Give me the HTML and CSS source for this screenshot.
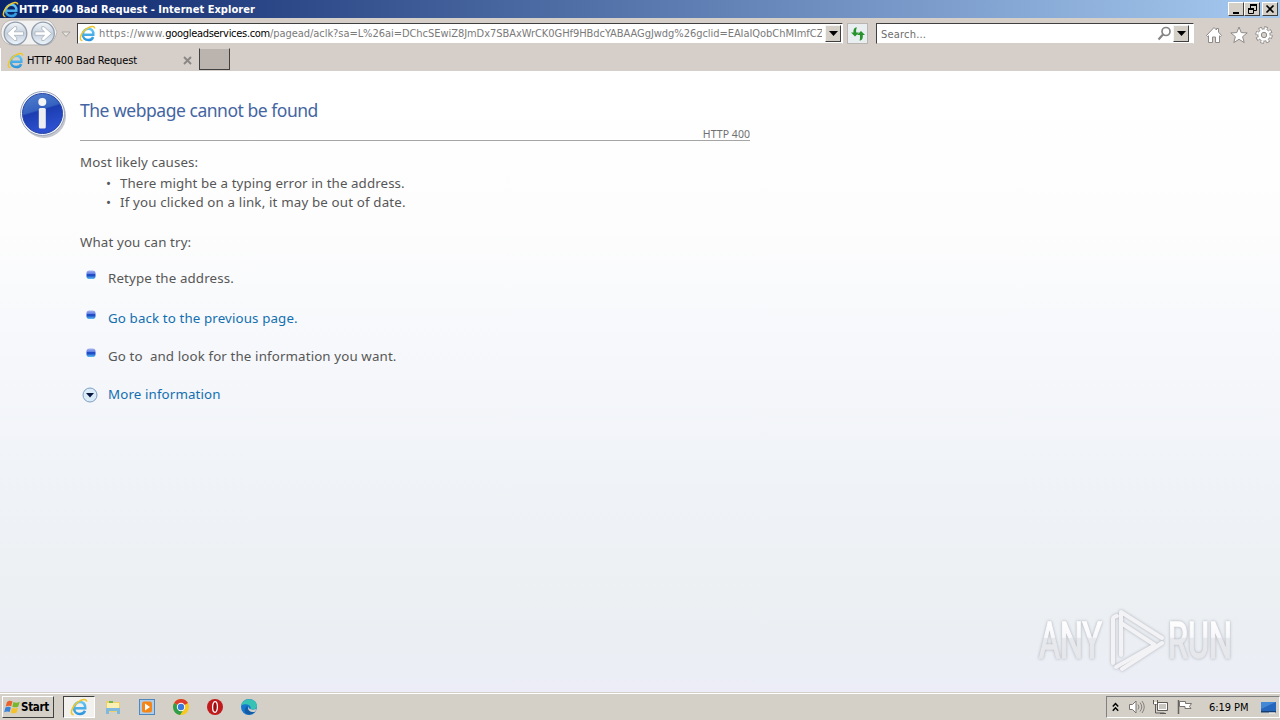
FILE: index.html
```html
<!DOCTYPE html>
<html lang="en">
<head>
    <meta charset="UTF-8">
    <title>HTTP 400 Bad Request</title>
    <link rel="stylesheet" href="styles.css">
</head>
<body>
    <!-- shared icons -->
    <svg class="defs" width="0" height="0">
        <defs>
            <linearGradient id="ieBlue" gradientUnits="userSpaceOnUse" x1="0" y1="2" x2="0" y2="15">
                <stop offset="0" stop-color="#6fcdf6"/>
                <stop offset="1" stop-color="#2a93dc"/>
            </linearGradient>
            <linearGradient id="nav" x1="0" y1="0" x2="0" y2="1">
                <stop offset="0" stop-color="#f4f7fb"/>
                <stop offset="0.5" stop-color="#c5d0dd"/>
                <stop offset="1" stop-color="#eef5fc"/>
            </linearGradient>
            <linearGradient id="info" x1="0" y1="0" x2="0.3" y2="1">
                <stop offset="0" stop-color="#5583cf"/>
                <stop offset="0.48" stop-color="#3562c0"/>
                <stop offset="0.52" stop-color="#1c3db0"/>
                <stop offset="1" stop-color="#2c50d0"/>
            </linearGradient>
            <linearGradient id="dot" x1="0" y1="0" x2="0" y2="1">
                <stop offset="0" stop-color="#a9b4f0"/>
                <stop offset="0.4" stop-color="#5e7fe2"/>
                <stop offset="0.5" stop-color="#0b35bd"/>
                <stop offset="1" stop-color="#62c1f5"/>
            </linearGradient>
            <linearGradient id="mark" gradientUnits="userSpaceOnUse" x1="0" y1="12" x2="0" y2="54">
                <stop offset="0" stop-color="#ffffff"/>
                <stop offset="0.46" stop-color="#f8f8fb"/>
                <stop offset="0.48" stop-color="#e8e9ed"/>
                <stop offset="1" stop-color="#e6e7eb"/>
            </linearGradient>
            <symbol id="ie" viewBox="0 0 16 16">
                <path d="M4.800 9.100h8.700C13.800 5.200 11.500 3.600 9 3.600 6 3.600 3.600 5.800 3.600 9s2.300 5.200 5.200 5.200c2.200 0 3.800-1 4.500-2.900" fill="none" stroke="url(#ieBlue)" stroke-width="2.300"/>
                <path d="M3.200 14.800C-.6 14.500 1.500 7.500 7 3.700c3.500-2.500 7.800-3.500 7.700-.5" fill="none" stroke="#efc62b" stroke-width="1.400"/>
            </symbol>
            <symbol id="bullet" viewBox="0 0 10 10">
                <rect x="0.500" y="0.500" width="9" height="8.500" rx="2.800" fill="url(#dot)"/>
            </symbol>
        </defs>
    </svg>

    <div class="titlebar">
        <svg class="title-icon" width="17" height="17"><use href="#ie"/></svg>
        <span class="title-text">HTTP 400 Bad Request - Internet Explorer</span>
        <div class="win-buttons">
            <span class="win-btn"><svg width="14" height="12"><path d="M4 9h6v2H4z"/></svg></span>
            <span class="win-btn"><svg width="14" height="12"><path d="M5 1h7v2H5zM3 5h6v2H3z"/><path d="M5.500 2v3M11.500 2v5.500H9M3.500 6v4.500h5V6" fill="none" stroke="#000"/></svg></span>
            <span class="win-btn close"><svg width="14" height="12"><path d="M3.500 2.500l7 7M10.500 2.500l-7 7" stroke="#000" stroke-width="1.700"/></svg></span>
        </div>
    </div>

    <div class="navbar">
        <svg class="nav-buttons" width="72" height="28">
            <path d="M13 1h33c5 0 8 5 11 12-2 8-6 13-12 13H13C-3 26-3 1 13 1z" fill="#f3f2f2" stroke="#bdb8b4"/>
            <circle cx="15.500" cy="14.500" r="11.300" fill="url(#nav)" stroke="#929eac" stroke-width="1.300"/>
            <circle cx="43" cy="14.500" r="11.300" fill="url(#nav)" stroke="#929eac" stroke-width="1.300"/>
            <path d="M7 14.500l7.500-6.800h2.200v2.600l-2.700 2.500h9.500v3.500H14l2.700 2.500v2.700h-2.200z" fill="#fff" stroke="#a8b2bd" stroke-width="0.800"/>
            <path d="M51.500 14.500L44 7.700h-2.200v2.600l2.700 2.500H35v3.500h9.500l-2.700 2.500v2.700H44z" fill="#fff" stroke="#a8b2bd" stroke-width="0.800"/>
            <path d="M62 13h8l-4 4.500z" fill="#e8e4e0" stroke="#aaa5a1"/>
        </svg>
        <div class="field address">
            <svg width="17" height="17"><use href="#ie"/></svg>
            <div class="url"><span class="scheme">https://www.</span><b>googleadservices.com</b>/pagead/aclk?sa=L%26ai=DChcSEwiZ8JmDx7SBAxWrCK0GHf9HBdcYABAAGgJwdg%26gclid=EAIaIQobChMImfCZg</div>
            <span class="drop"><svg width="9" height="5"><path d="M0 0h9L4.500 5z"/></svg></span>
        </div>
        <div class="refresh">
            <svg width="16" height="16"><path d="M7 1.500C4 1.500 3.300 3.500 3.500 6.500H1l4 4 4-4H6.200C6 4.500 6 3 7 1.500zM9.500 14.500c3 0 3.500-2.500 3.300-5.500H15l-4-4-4 4h2.900c0 2.500.4 4-.4 5.500z" fill="#27932d"/></svg>
        </div>
        <div class="field search">
            <span class="placeholder">Search...</span>
            <svg width="15" height="15"><circle cx="9" cy="5.500" r="4" fill="none" stroke="#858585" stroke-width="1.700"/><path d="M6 8.500l-4.500 5" stroke="#858585" stroke-width="2.200"/></svg>
            <span class="drop"><svg width="9" height="5"><path d="M0 0h9L4.500 5z"/></svg></span>
        </div>
        <div class="tools">
            <svg width="18" height="18"><path d="M9 1.500l2.500 2.500V2.500h2v3.600L16.500 9.500l-1 1-1-.7V16.500h-4V11h-3v5.500h-4V9.800l-1 .7-1-1z" fill="#fff" stroke="#8f8b88"/></svg>
            <svg width="18" height="18"><path d="M9 1l2.200 5.600 6 .3-4.600 3.800 1.600 5.900L9 13.300l-5.200 3.300 1.600-5.900L.8 6.900l6-.3z" fill="#fff" stroke="#8f8b88"/></svg>
            <svg width="18" height="18"><circle cx="9" cy="9" r="7" fill="none" stroke="#8f8b88" stroke-width="3.400" stroke-dasharray="3.300 2.200"/><circle cx="9" cy="9" r="6.200" fill="#fff" stroke="#8f8b88"/><circle cx="9" cy="9" r="6.600" fill="none" stroke="#fff" stroke-width="2.400" stroke-dasharray="2.100 3.080" stroke-dashoffset="-0.500"/><circle cx="9" cy="9" r="2.700" fill="#d4d0c8" stroke="#8f8b88"/></svg>
        </div>
    </div>

    <div class="tabs">
        <div class="tab">
            <svg width="17" height="17"><use href="#ie"/></svg>
            <span class="tab-title">HTTP 400 Bad Request</span>
            <svg class="tab-close" width="9" height="9"><path d="M1 1l7 7M8 1L1 8" stroke="#8b8784" stroke-width="1.900"/></svg>
        </div>
        <div class="new-tab"></div>
    </div>

    <div class="page">
        <svg class="info-icon" width="50" height="50">
            <ellipse cx="24" cy="25" rx="22" ry="22" fill="#c3c6cc"/>
            <circle cx="22.500" cy="22.500" r="22" fill="#f5f7fb" stroke="#97a3ba"/>
            <circle cx="22.500" cy="22.500" r="20" fill="url(#info)" stroke="#2947a6"/>
            <circle cx="22.300" cy="11" r="4" fill="#f4f5f7"/>
            <rect x="18.800" y="17" width="7" height="20.500" rx="1.500" fill="#eceef2"/>
        </svg>
        <div class="message">
            <h1>The webpage cannot be found</h1>
            <div class="code">HTTP 400</div>
            <p class="causes-title">Most likely causes:</p>
            <ul class="causes">
                <li>There might be a typing error in the address.</li>
                <li class="stale">If you clicked on a link, it may be out of date.</li>
            </ul>
            <p class="try-title">What you can try:</p>
            <div class="try">
                <svg width="10" height="10"><use href="#bullet"/></svg>
                <span>Retype the address.</span>
            </div>
            <div class="try back">
                <svg width="10" height="10"><use href="#bullet"/></svg>
                <a>Go back to the previous page.</a>
            </div>
            <div class="try">
                <svg width="10" height="10"><use href="#bullet"/></svg>
                <span>Go to&nbsp; and look for the information you want.</span>
            </div>
            <div class="try more">
                <svg width="16" height="16"><circle cx="8" cy="8" r="7" fill="#dcebf8" stroke="#7f9fc0"/><path d="M4 6h8l-4 4.500z" fill="#06163c"/></svg>
                <a>More information</a>
            </div>
        </div>
        <svg class="watermark" width="224" height="76" viewBox="0 0 224 76">
            <g class="mark-text">
                <text x="5" y="52" textLength="63" lengthAdjust="spacingAndGlyphs">ANY</text>
                <text x="134" y="52" textLength="64" lengthAdjust="spacingAndGlyphs">RUN</text>
            </g>
            <g class="mark-logo">
                <path d="M79 57V13q0-2 4-3"/>
                <path d="M87 49V6l41 26"/>
                <path d="M87 17l34 22-39 22"/>
                <path d="M128 37L88 63"/>
            </g>
        </svg>
    </div>

    <div class="taskbar">
        <div class="start">
            <svg width="17" height="16"><path d="M3 3c2-2 4-1.500 5.500-.5L7.200 7.300C5.500 6.500 4 6.500 1.700 7.500z" fill="#e8642c"/><path d="M9.500 3c2 1 4 1 6.200-.3L14.300 7.500c-2 1.200-4 1-6 .2z" fill="#78b72c"/><path d="M1.400 8.600c2-1.200 4-1 5.500-.2L5.600 13C4 12.200 2.300 12.200.2 13.300z" fill="#3a83d8"/><path d="M8 8.800c2 1 4 1 6 0L12.700 13.500c-2 1.300-4 1-6 0z" fill="#f6c22c"/></svg>
            <span>Start</span>
        </div>
        <div class="task active"><svg width="18" height="18"><use href="#ie"/></svg></div>
        <div class="task">
            <svg width="18" height="18"><path d="M2 3h5l1 1h8v10H2z" fill="#eed06a"/><path d="M3 5h12v5H3z" fill="#fbf0b4"/><path d="M5 3h4v2H5z" fill="#71b54e"/><path d="M2 10h14v6h-3v-3H5v3H2z" fill="#7fb9df"/></svg>
        </div>
        <div class="task">
            <svg width="18" height="18"><rect x="1.500" y="1.500" width="15" height="15" fill="#aecdeb" stroke="#4f88bd"/><rect x="4" y="3.500" width="10" height="11" rx="2" fill="#f48618"/><path d="M7 5.500v7l5-3.500z" fill="#fff"/></svg>
        </div>
        <div class="task">
            <svg width="18" height="18"><circle cx="9" cy="9" r="8" fill="#f8c91c"/><path d="M9 9L2.100 5A8 8 0 0 1 16 5z" fill="#dc3d2e"/><path d="M9 9L2.100 5A8 8 0 0 0 8 17l4-6z" fill="#2f9e4b"/><circle cx="9" cy="9" r="4.200" fill="#fff"/><circle cx="9" cy="9" r="3.200" fill="#3b79dc"/></svg>
        </div>
        <div class="task">
            <svg width="18" height="18"><circle cx="9" cy="9" r="8" fill="#c01a1c"/><ellipse cx="9" cy="9" rx="2.400" ry="5.300" fill="#a20a0e" stroke="#fff" stroke-width="1.300"/></svg>
        </div>
        <div class="task">
            <svg width="18" height="18"><circle cx="9" cy="9" r="8" fill="#1677cf"/><path d="M1.200 7.500C2.500-1 16.500-1 17 8c0 3-4 4.500-6.500 3 1.500-4-4.500-6.500-9.300-3.500z" fill="#38c2b4"/><path d="M8 8c-1.500 4 2 7.300 7 5.500-4 5-12 3.500-10-2.500C5.500 9 7 8 8 8z" fill="#145aa5"/><path d="M8.500 8c-1 3 3.500 5 8.500 2.500l-2 3.200C10.500 15 6.500 12 8.500 8z" fill="#d4d0c8"/></svg>
        </div>
        <div class="tray">
            <svg class="chevrons" width="7" height="10"><path d="M.8 4.500l2.700-3 2.700 3M.8 8.800l2.700-3 2.700 3" fill="none" stroke="#000" stroke-width="1.500"/></svg>
            <svg class="speaker" width="18" height="16"><path d="M1.500 5.500h3L8 2v12l-3.500-3.500h-3z" fill="#fff" stroke="#77736f"/><path d="M10 5.500q2 2.500 0 5M12 3.500q3.500 4.500 0 9M14 2q4.500 6 0 12" fill="none" stroke="#85817d"/></svg>
            <svg class="network" width="17" height="16"><path d="M5.500 3.500h10v8h-10z" fill="#c9c6c2" stroke="#5d5956"/><path d="M6.500 4.500h8v6h-8z" fill="none" stroke="#fff"/><path d="M1.500 1v4h4V1M3.500 5v9h9M8 14.500h6" fill="none" stroke="#5d5956"/><path d="M2 3h3v2H2z" fill="#fff"/></svg>
            <svg class="flag" width="16" height="16"><path d="M1.500 1v14" stroke="#66625f" stroke-width="1.500"/><path d="M2.500 2.500h6v2h6l-2 3 1.500 2H8v-2H2.500z" fill="#fff" stroke="#77736f"/></svg>
            <span class="clock">6:19 PM</span>
            <svg class="desktop" width="15" height="15"><path d="M0 2h15v9H0z" fill="#2766bd"/><path d="M0 2h15L0 9z" fill="#4288d6"/><path d="M0 11h15v1.500H0z" fill="#173e70"/><path d="M8 13h6" stroke="#f4f4f4"/></svg>
        </div>
    </div>
</body>
</html>
```

FILE: styles.css
```css
* {
    box-sizing: border-box;
}
body {
    margin: 0;
    width: 1280px;
    height: 720px;
    overflow: hidden;
    display: flex;
    flex-direction: column;
    background-color: #d4d0c8;
    font-family: "DejaVu Sans Condensed", "DejaVu Sans", sans-serif;
    font-size: 11px;
    color: #000;
}
svg {
    display: block;
    flex: none;
}
.defs {
    position: absolute;
}
span, a, p, h1, li {
    white-space: nowrap;
}

/* title bar */
.titlebar {
    height: 18px;
    flex: none;
    display: flex;
    align-items: center;
    padding: 0 2px;
    background: linear-gradient(90deg, #0a246a, #a6caf0);
}
.title-text {
    color: #fff;
    font-weight: bold;
    letter-spacing: 0.04px;
    flex: 1;
}
.win-buttons {
    display: flex;
}
.win-btn {
    width: 16px;
    height: 14px;
    background-color: #d4d0c8;
    border: 1px solid;
    border-color: #fff #404040 #404040 #fff;
}
.close {
    margin-left: 2px;
}

/* navigation row */
.navbar {
    height: 30px;
    flex: none;
    display: flex;
    align-items: flex-start;
    background-color: #d5cec9;
    border-top: 1px solid #d4d0c8;
}
.nav-buttons {
    margin-right: 5px;
}
.field {
    height: 21px;
    margin-top: 4px;
    display: flex;
    align-items: center;
    background-color: #fff;
    border: 1px solid;
    border-color: #404040 #fff #d4d0c8 #404040;
}
.address {
    width: 766px;
    padding: 0 1px;
}
.url {
    width: 723px;
    margin-left: 3px;
    overflow: hidden;
    white-space: nowrap;
    color: #7a7a7a;
    letter-spacing: -0.05px;
}
.url b {
    font-weight: normal;
    color: #000;
    letter-spacing: -0.3px;
}
.scheme {
    letter-spacing: 0.36px;
}
.drop {
    width: 16px;
    height: 17px;
    margin-left: auto;
    display: flex;
    align-items: center;
    justify-content: center;
    background-color: #d4d0c8;
    border: 1px solid;
    border-color: #f5f5f5 #404040 #404040 #f5f5f5;
}
.refresh {
    width: 21px;
    height: 21px;
    margin: 4px 8px 0 4px;
    padding: 2px;
    background-color: #e9eef1;
    border: 1px solid #b9b6b2;
}
.search {
    width: 318px;
    padding: 0 4px;
    color: #6d6d6d;
}
.placeholder {
    flex: 1;
    padding-top: 1px;
    letter-spacing: 0.2px;
}
.search .drop {
    margin-left: 1px;
}
.tools {
    display: flex;
    gap: 7px;
    margin: 7px 0 0 11px;
}

/* tabs */
.tabs {
    height: 23px;
    flex: none;
    display: flex;
    background-color: #d5cec9;
}
.tab {
    width: 199px;
    display: flex;
    align-items: center;
    padding: 1px 7px 0 6px;
    border-left: 1px solid #fff;
}
.tab-title {
    margin-left: 3px;
    flex: 1;
    letter-spacing: -0.15px;
}
.new-tab {
    width: 31px;
    height: 22px;
    background-color: #bbb3ae;
    border: 1px solid #404040;
    border-top-color: #d5cec9;
}

/* error page */
.page {
    position: relative;
    height: 621px;
    flex: none;
    display: flex;
    background: linear-gradient(#fff 0, #fdfdfd 150px, #f5f7fb 300px, #f0f3f7 400px, #ecf0f3 520px, #ebeff3 570px, #ecedf7 621px);
    font-family: "Noto Sans", "Open Sans", sans-serif;
    font-size: 13.33px;
    letter-spacing: 0.12px;
    color: #575757;
}
.info-icon {
    margin: 20px 10px 0 20px;
}
.message {
    width: 670px;
}
h1 {
    margin: 26px 0 0;
    font-size: 17.5px;
    line-height: 27px;
    font-weight: normal;
    color: #4465a2;
    letter-spacing: -0.47px;
}
.code {
    height: 17px;
    border-bottom: 1px solid #a5a5a5;
    font-size: 10.5px;
    line-height: 20px;
    text-align: right;
    letter-spacing: 0.05px;
    color: #707070;
}
p {
    margin: 0;
    line-height: 20px;
}
.causes-title {
    margin-top: 11px;
}
.causes {
    margin: 2px 0 0;
    padding: 0;
    list-style: none;
}
.causes li {
    display: flex;
    height: 19px;
    line-height: 19px;
    letter-spacing: 0.09px;
}
.causes .stale {
    letter-spacing: 0.15px;
}
.causes li::before {
    content: "•";
    width: 14px;
    margin-left: 26px;
}
.try-title {
    margin-top: 20px;
}
.try {
    display: flex;
    height: 20px;
    line-height: 20px;
    margin: 16px 0 18px;
}
.try svg {
    margin: 2px 12px 0 6px;
}
.back {
    margin-top: 20px;
}
.more svg {
    margin: 3px 10px 0 2px;
}
.try a {
    color: #136fb0;
}
.watermark {
    position: absolute;
    left: 1034px;
    top: 535px;
}
.mark-text {
    font-family: Roboto, sans-serif;
    font-size: 50px;
    fill: url(#mark);
    stroke: url(#mark);
    stroke-width: 1.6px;
    filter: drop-shadow(0 0 1.5px #aaaeb8);
}
.mark-logo {
    fill: none;
    stroke: #f3f3f6;
    stroke-width: 4px;
    stroke-linecap: round;
    stroke-linejoin: round;
    filter: drop-shadow(0 0 1.5px #aaaeb8);
}

/* taskbar */
.taskbar {
    height: 28px;
    flex: none;
    display: flex;
    align-items: center;
    padding: 1px 0 0 2px;
    border-top: 1px solid #d4d0c8;
    box-shadow: inset 0 1px #fff;
    background-color: #d4d0c8;
}
.start {
    width: 52px;
    height: 22px;
    display: flex;
    align-items: center;
    padding-left: 1px;
    font-weight: bold;
    font-size: 11.5px;
    letter-spacing: -0.3px;
    border: 1px solid;
    border-color: #fff #404040 #404040 #fff;
    margin-right: 9px;
}
.task {
    width: 34px;
    height: 22px;
    display: flex;
    align-items: center;
    justify-content: center;
}
.task.active {
    width: 32px;
    margin-right: 1px;
    background-color: #f3f1ee;
    border: 1px solid;
    border-color: #404040 #fff #fff #404040;
}
.tray {
    margin-left: auto;
    width: 174px;
    height: 22px;
    display: flex;
    align-items: center;
    padding: 0 3px 0 5px;
    border: 1px solid;
    border-color: #808080 #fff #fff #808080;
}
.speaker {
    margin-left: 9px;
}
.network {
    margin-left: 6px;
}
.flag {
    margin-left: 8px;
}
.clock {
    margin: 0 auto 0 16px;
    letter-spacing: -0.05px;
}
```
